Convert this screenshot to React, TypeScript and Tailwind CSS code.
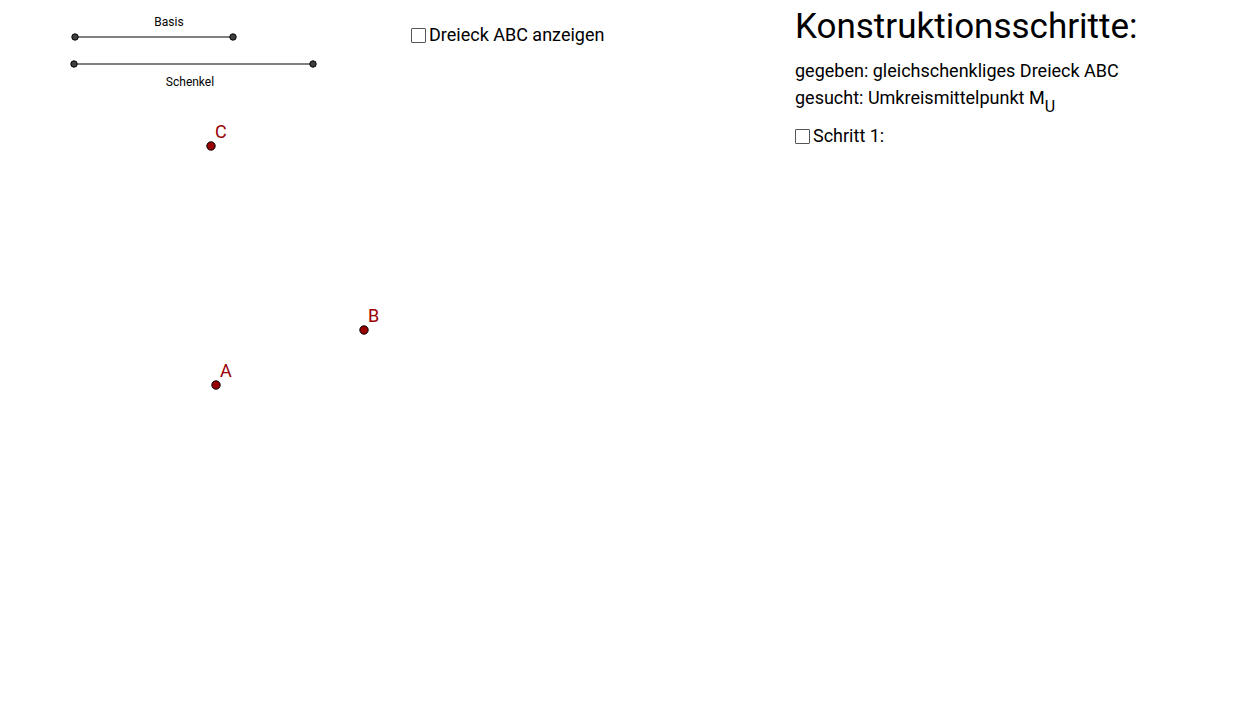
import { useState } from "react";

interface IPoint {
  name: string;
  x: number;
  y: number;
}

interface ISegment {
  name: string;
  x1: number;
  x2: number;
  y: number;
  labelX: number;
  labelY: number;
}

const points: IPoint[] = [
  { name: "A", x: 216, y: 385 },
  { name: "B", x: 364, y: 330 },
  { name: "C", x: 211, y: 146 },
];

const segments: ISegment[] = [
  { name: "Basis", x1: 75, x2: 233, y: 37, labelX: 169, labelY: 26 },
  { name: "Schenkel", x1: 74, x2: 313, y: 64, labelX: 190, labelY: 86 },
];

interface ICheckboxProps {
  id: string;
  label: string;
  checked: boolean;
  onChange: (checked: boolean) => void;
}

const Checkbox = ({ id, label, checked, onChange }: ICheckboxProps) => (
  <div className="flex items-center gap-[3px]">
    <input
      id={id}
      type="checkbox"
      checked={checked}
      onChange={(e) => onChange(e.target.checked)}
      className="size-[15px] shrink-0 appearance-none rounded-[1px] border border-[#555555] bg-white checked:bg-[#555555]"
    />
    <label htmlFor={id} className="text-lg leading-6">
      {label}
    </label>
  </div>
);

const Figure = ({ showTriangle }: { showTriangle: boolean }) => (
  <svg
    viewBox="0 0 411 420"
    className="block w-full"
    role="img"
    aria-label="Dreieck ABC"
  >
    {segments.map((s) => (
      <g key={s.name}>
        <line x1={s.x1} y1={s.y} x2={s.x2} y2={s.y} stroke="#808080" strokeWidth="2" />
        {[s.x1, s.x2].map((x) => (
          <circle key={x} cx={x} cy={s.y} r="3.2" fill="#404040" stroke="#000000" />
        ))}
        <text x={s.labelX} y={s.labelY} textAnchor="middle" className="text-xs">
          {s.name}
        </text>
      </g>
    ))}

    {showTriangle && (
      <polygon
        points={points.map((p) => `${p.x},${p.y}`).join(" ")}
        fill="#990000"
        fillOpacity="0.1"
        stroke="#990000"
      />
    )}

    {points.map((p) => (
      <g key={p.name}>
        <circle cx={p.x} cy={p.y} r="4.2" fill="#990000" stroke="#000000" />
        <text x={p.x + 4} y={p.y - 8} fill="#990000" className="text-lg">
          {p.name}
        </text>
      </g>
    ))}
  </svg>
);

const App = () => {
  const [showTriangle, setShowTriangle] = useState(false);
  const [stepOne, setStepOne] = useState(false);

  return (
    <main className="grid min-h-screen grid-cols-[411px_auto_453px] bg-white font-['Roboto',sans-serif] text-black">
      {/* Construction */}
      <Figure showTriangle={showTriangle} />

      <div className="pt-[23px]">
        <Checkbox
          id="triangle"
          label="Dreieck ABC anzeigen"
          checked={showTriangle}
          onChange={setShowTriangle}
        />
      </div>

      {/* Steps */}
      <section className="pt-1">
        <h1 className="text-[35px] leading-[46px]">Konstruktionsschritte:</h1>
        <div className="mt-[7px] text-lg leading-[27px]">
          <p>gegeben: gleichschenkliges Dreieck ABC</p>
          <p>
            gesucht: Umkreismittelpunkt M
            <sub className="bottom-[-8px] align-baseline text-base leading-none">U</sub>
          </p>
        </div>
        <div className="mt-[13px]">
          <Checkbox
            id="step-1"
            label="Schritt 1:"
            checked={stepOne}
            onChange={setStepOne}
          />
        </div>
      </section>
    </main>
  );
};
export default App;
